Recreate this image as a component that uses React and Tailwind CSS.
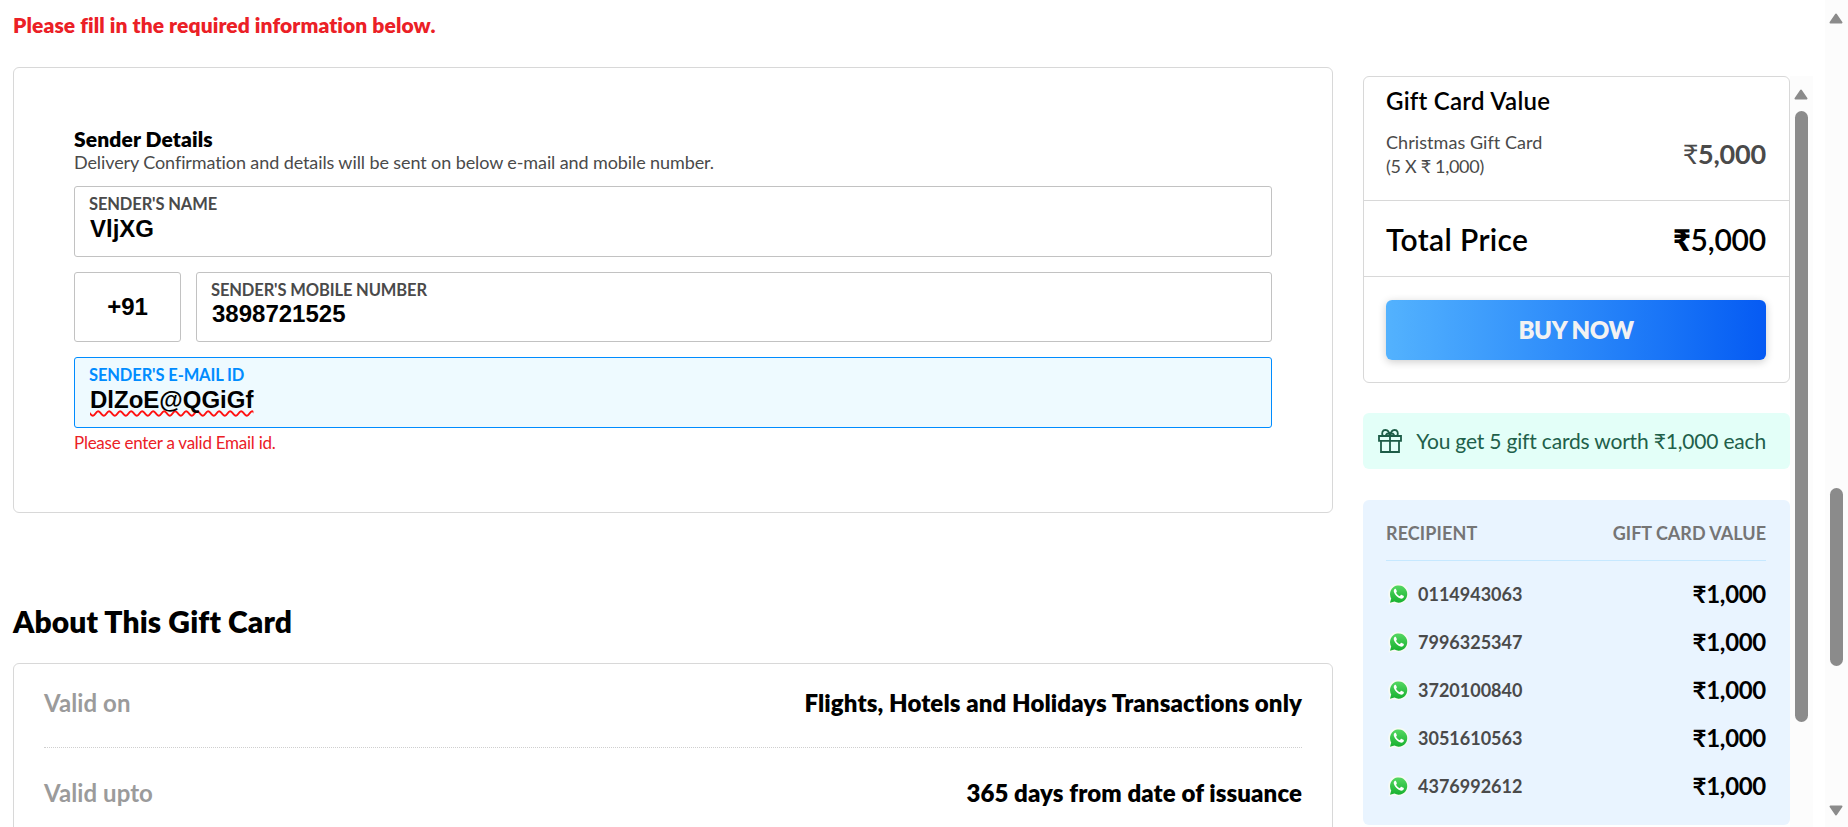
const recipients = ["0114943063", "7996325347", "3720100840", "3051610563", "4376992612"];

const terms = [
  ["Valid on", "Flights, Hotels and Holidays Transactions only"],
  ["Valid upto", "365 days from date of issuance"],
];

function WhatsAppIcon() {
  return (
    <svg viewBox="0 0 24 24" className="ml-px size-6 shrink-0">
      <defs>
        <linearGradient id="wa" x1="0" y1="0" x2="0" y2="1">
          <stop offset="0" stopColor="#55d862" />
          <stop offset="1" stopColor="#17b02f" />
        </linearGradient>
      </defs>
      <path d="M1.500 22.600 2.700 17.200A10.200 10.200 0 1 1 7.200 21.200Z" fill="#f7faf5" />
      <path d="M3 20.800 4.200 16.400A8.600 8.600 0 1 1 7.500 19.600Z" fill="url(#wa)" />
      <path
        d="M9 7.300c-.3-.6-.9-.6-1.400-.2-.9.8-1.100 2-.6 3.200 1 3 3.400 5.200 6.400 6.200 1.400.4 2.900-.1 3.400-1.400.2-.6.100-1-.3-1.300l-1.800-.9c-.4-.2-.7-.1-1 .2l-.6.9c-.2.200-.4.300-.7.100-1.400-.6-2.500-1.600-3.200-3-.1-.3-.1-.5.100-.7l.5-.8c.1-.2.100-.4 0-.6Z"
        fill="#fff"
      />
    </svg>
  );
}

function GiftIcon() {
  return (
    <svg viewBox="0 0 24 24" className="size-6 shrink-0" fill="none" stroke="#1d5c47" strokeWidth="1.8">
      <path d="M1 7h22v4.800H1zM3 11.800h18V23H3zM12 7V23" />
      <path d="M11.600 7C11.400 3.300 9.900 1 7.400 1 4.400 1 3.400 4 4.800 7M12.400 7C12.600 3.300 14.100 1 16.600 1c3 0 4 3 2.600 6M7.600 6.800C8.200 5.200 9.800 4 12 4s3.800 1.200 4.400 2.800" />
    </svg>
  );
}

function Arrow({ down }) {
  return (
    <svg viewBox="0 0 14 11" className={down ? "-ml-px h-[11px] w-[14px] rotate-180" : "-ml-px h-[11px] w-[14px]"}>
      <path d="M7 1.500 12.500 9.500H1.500Z" fill="#8b8b8b" stroke="#8b8b8b" strokeWidth="2" strokeLinejoin="round" />
    </svg>
  );
}

function Field({ label, value, className = "", valueClass = "mt-px", active }) {
  return (
    <div
      className={`rounded-[3px] border pt-[7px] pl-3.5 ${
        active ? "border-[#008cff] bg-[#eefaff]" : "border-[#c2c2c2]"
      } ${className}`}
    >
      <div
        className={`text-[16.5px] leading-5 font-bold tracking-[-0.13px] ${
          active ? "text-[#008cff]" : "text-[#4a4a4a]"
        }`}
      >
        {label}
      </div>
      <div
        className={`pl-px font-['Liberation_Sans',sans-serif] text-2xl leading-7 font-bold text-black ${valueClass}`}
      >
        <span
          className={
            active
              ? "underline decoration-[#ff1010] decoration-wavy decoration-[1.5px] underline-offset-[2px] [text-decoration-skip-ink:none]"
              : ""
          }
        >
          {value}
        </span>
      </div>
    </div>
  );
}

export default function App() {
  return (
    <div className="flex h-[827px] overflow-hidden bg-white font-['Lato',sans-serif] text-black [font-variant-ligatures:none]">
      <main className="ml-[13px] w-[1320px] shrink-0 pt-2.5">
        <p className="text-[21px] leading-[30px] font-extrabold tracking-[0.1px] text-[#eb2026]">
          Please fill in the required information below.
        </p>

        <section className="mt-[27px] h-[446px] rounded-md border border-[#d8d8d8] px-[60px] pt-[59px]">
          <h2 className="text-[21px] leading-6 font-extrabold tracking-[0.12px]">Sender Details</h2>
          <p className="-mt-px text-lg leading-6 tracking-[-0.1px] text-[#4a4a4a]">
            Delivery Confirmation and details will be sent on below e-mail and mobile number.
          </p>
          <Field label="SENDER'S NAME" value="VljXG" className="mt-3 h-[71px]" />
          <div className="mt-[15px] flex h-[70px] gap-[15px]">
            <div className="flex w-[107px] items-center justify-center rounded-[3px] border border-[#c2c2c2] pb-px font-['Liberation_Sans',sans-serif] text-2xl font-bold">
              +91
            </div>
            <Field label="SENDER'S MOBILE NUMBER" value="3898721525" className="flex-1" valueClass="mt-0" />
          </div>
          <Field label="SENDER'S E-MAIL ID" value="DlZoE@QGiGf" className="mt-[15px] h-[71px]" active />
          <p className="mt-[3px] text-[17px] leading-6 tracking-[-0.26px] text-[#eb2026]">
            Please enter a valid Email id.
          </p>
        </section>

        <h1 className="mt-[90px] text-[30px] leading-9 font-extrabold tracking-[0.12px]">About This Gift Card</h1>
        <section className="mt-6 h-[300px] rounded-md border border-[#d8d8d8] px-[30px]">
          {terms.map(([name, text]) => (
            <div
              key={name}
              className="flex justify-between border-b border-dotted border-[#cfcfcf] pt-[30px] pb-[29px] text-2xl leading-[30px] first:pt-6"
            >
              <span className="font-bold tracking-[0.08px] text-[#9b9b9b]">{name}</span>
              <span className="font-extrabold tracking-[0.1px]">{text}</span>
            </div>
          ))}
        </section>
      </main>

      <aside className="ml-[30px] w-[427px] shrink-0 pt-[76px]">
        <section className="rounded-md border border-[#d8d8d8]">
          <div className="border-b border-[#d8d8d8] pt-[9px] pr-[23px] pb-[22px] pl-[22px]">
            <h2 className="text-2xl leading-[30px] font-semibold tracking-[0.25px]">Gift Card Value</h2>
            <div className="mt-3.5 flex items-center justify-between text-[#4a4a4a]">
              <p className="text-lg leading-6">
                <span className="tracking-[0.06px]">Christmas Gift Card</span>
                <br />
                <span className="tracking-[-0.3px]">(5 X ₹ 1,000)</span>
              </p>
              <span className="text-[27px] leading-9 font-bold tracking-[-0.2px]">
                <span className="font-normal">₹</span>5,000
              </span>
            </div>
          </div>
          <div className="flex h-[76px] items-center justify-between border-b border-[#d8d8d8] pt-px pr-[23px] pl-[22px] text-[30px] font-semibold">
            <span className="tracking-[0.35px]">Total Price</span>
            <span className="tracking-[-0.2px]">
              <span className="font-extrabold">₹</span>5,000
            </span>
          </div>
          <div className="pt-[23px] pr-[23px] pb-[22px] pl-[22px]">
            <button className="h-[60px] w-full rounded-md bg-linear-to-r from-[#53b2fe] to-[#065af3] text-2xl font-extrabold tracking-[-0.4px] text-[#f2f2f2] shadow-[0_2px_9px_rgba(0,0,0,0.2)]">
              BUY NOW
            </button>
          </div>
        </section>

        <div className="mt-[30px] flex h-14 items-center justify-between rounded-md bg-[#e3fff8] pr-6 pl-[15px] text-[21px] tracking-[-0.18px] whitespace-nowrap text-[#21604a]">
          <GiftIcon />
          <span>You get 5 gift cards worth ₹1,000 each</span>
        </div>

        <section className="mt-[31px] h-[325px] rounded-md bg-[#e9f4ff] pt-[21px] pr-6 pl-[23px]">
          <div className="flex justify-between border-b border-[#c6e8ff] pb-[15px] text-lg leading-6 font-bold text-[#757575]">
            <span className="tracking-[0.1px]">RECIPIENT</span>
            <span>GIFT CARD VALUE</span>
          </div>
          <ul className="pt-[9px]">
            {recipients.map((number) => (
              <li key={number} className="flex h-12 items-center">
                <WhatsAppIcon />
                <span className="ml-[7px] text-lg font-bold text-[#4a4a4a]">{number}</span>
                <span className="ml-auto text-2xl font-bold tracking-[-0.3px]">₹1,000</span>
              </li>
            ))}
          </ul>
        </section>
      </aside>

      <div className="mt-[76px] flex w-[23px] flex-col items-center bg-[#fcfcfc] pt-[13px]">
        <Arrow />
        <div className="mt-[11px] h-[611px] w-[13px] rounded-full bg-[#8b8b8b]" />
      </div>

      <div className="ml-auto flex w-[23px] flex-col items-center bg-[#fcfcfc] pt-[13px] pb-[11px]">
        <Arrow />
        <div className="mt-[464px] h-[178px] w-[13px] rounded-full bg-[#8b8b8b]" />
        <div className="mt-auto">
          <Arrow down />
        </div>
      </div>
    </div>
  );
}
